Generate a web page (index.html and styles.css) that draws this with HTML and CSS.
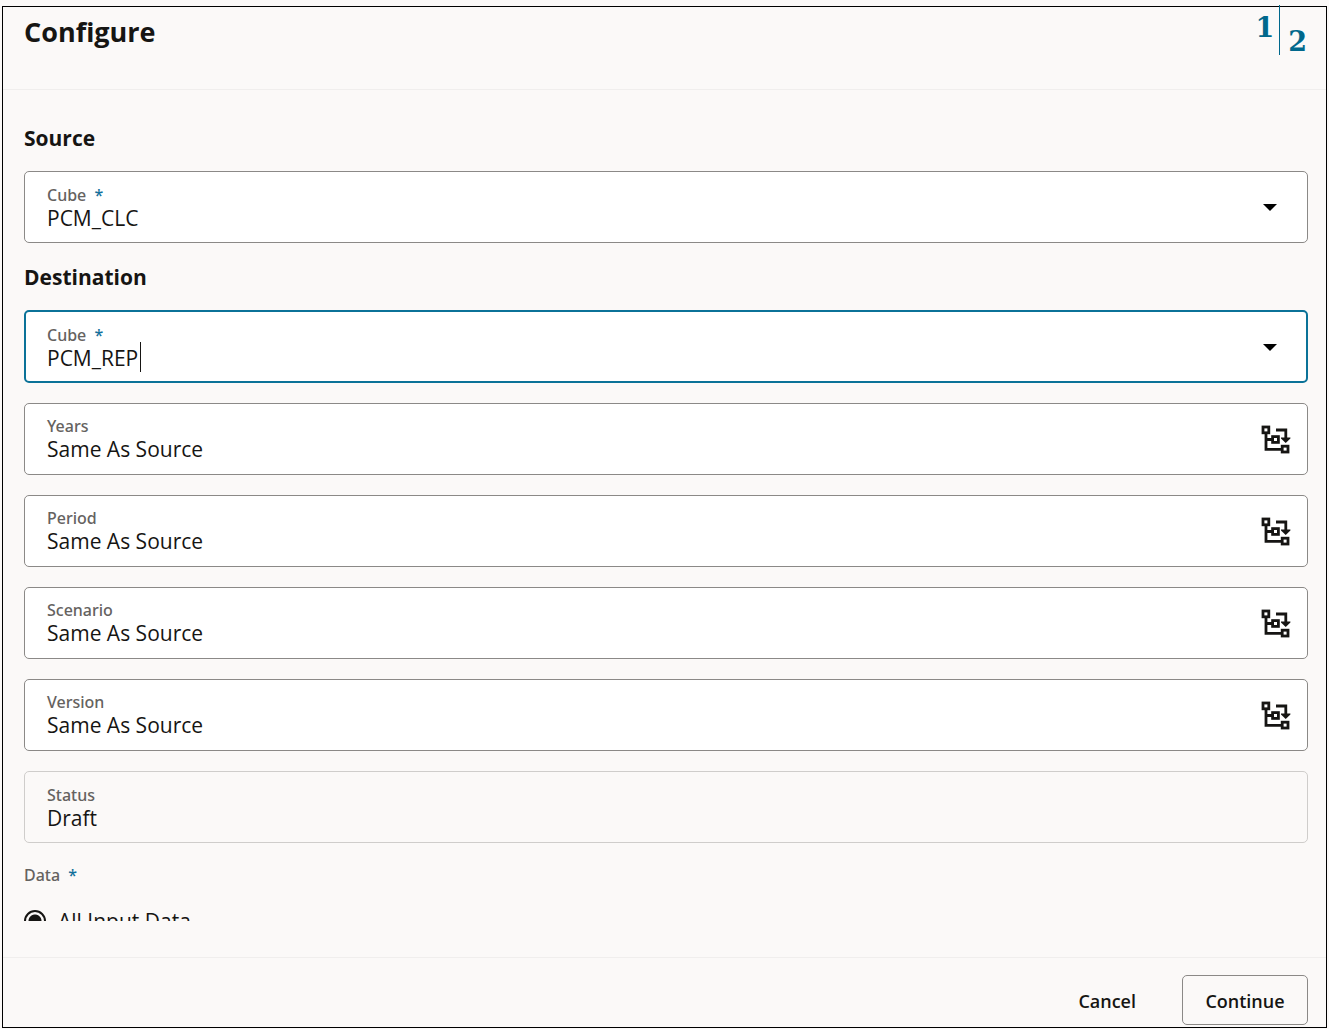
FILE: index.html
```html
<!DOCTYPE html>
<html lang="en">
<head>
  <meta charset="utf-8">
  <title>Configure</title>
  <link rel="stylesheet" href="styles.css">
</head>
<body>
  <!-- tree icon shared by the member selector buttons -->
  <svg class="symbols" aria-hidden="true">
    <symbol id="icon-tree" viewBox="0 -1 30 30">
      <g fill="none" stroke="currentColor" stroke-width="2.8">
        <rect x="2" y="2" width="5.8" height="5.8"/>
        <rect x="11.6" y="11.6" width="5.8" height="5.8"/>
        <rect x="21.2" y="21.2" width="5.8" height="5.8"/>
        <path d="M5 9v15.4h15M5 14.5h6M15 5h9.8v8"/>
      </g>
      <path d="M20 12.6h9.4v1L24.7 18 20 13.6z" fill="currentColor"/>
    </symbol>
  </svg>

  <form class="dialog">
    <header class="dialog-header">
      <h1>Configure</h1>
      <div class="steps">
        <span class="step">1</span>
        <span class="step step-last">2</span>
      </div>
    </header>

    <main class="dialog-body">
      <h2>Source</h2>
      <div class="field combo">
        <div class="field-text">
          <label for="source-cube">Cube <span class="required">*</span></label>
          <select id="source-cube" required>
            <option selected>PCM_CLC</option>
            <option>PCM_REP</option>
          </select>
        </div>
        <svg class="arrow" viewBox="0 0 14 7" aria-hidden="true"><path d="M0 0h14L7 7z"/></svg>
      </div>

      <h2>Destination</h2>
      <div class="fields">
        <div class="field combo focused">
          <div class="field-text">
            <label for="dest-cube">Cube <span class="required">*</span></label>
            <select id="dest-cube" required>
              <option>PCM_CLC</option>
              <option selected>PCM_REP</option>
            </select>
          </div>
          <span class="caret"></span>
          <svg class="arrow" viewBox="0 0 14 7" aria-hidden="true"><path d="M0 0h14L7 7z"/></svg>
        </div>

        <div class="field">
          <div class="field-text">
            <label for="years">Years</label>
            <input type="text" id="years" value="Same As Source">
          </div>
          <button type="button" class="picker" aria-label="Select Years"><svg><use href="#icon-tree"/></svg></button>
        </div>

        <div class="field">
          <div class="field-text">
            <label for="period">Period</label>
            <input type="text" id="period" value="Same As Source">
          </div>
          <button type="button" class="picker" aria-label="Select Period"><svg><use href="#icon-tree"/></svg></button>
        </div>

        <div class="field">
          <div class="field-text">
            <label for="scenario">Scenario</label>
            <input type="text" id="scenario" value="Same As Source">
          </div>
          <button type="button" class="picker" aria-label="Select Scenario"><svg><use href="#icon-tree"/></svg></button>
        </div>

        <div class="field">
          <div class="field-text">
            <label for="version">Version</label>
            <input type="text" id="version" value="Same As Source">
          </div>
          <button type="button" class="picker" aria-label="Select Version"><svg><use href="#icon-tree"/></svg></button>
        </div>

        <div class="field readonly">
          <div class="field-text">
            <label for="status">Status</label>
            <input type="text" id="status" value="Draft" readonly>
          </div>
        </div>
      </div>

      <fieldset class="data">
        <legend>Data <span class="required">*</span></legend>
        <label class="choice" for="all-input">
          <input type="radio" id="all-input" name="data" checked>
          All Input Data
        </label>
      </fieldset>
    </main>

    <footer class="dialog-footer">
      <button type="button" class="button">Cancel</button>
      <button type="submit" class="button outlined">Continue</button>
    </footer>
  </form>
</body>
</html>
```
FILE: styles.css
```css
* {
  box-sizing: border-box;
}
body {
  margin: 0;
  padding: 6px 2px 1px;
  height: 100vh;
  background-color: #fbf9f8;
  color: #161513;
  font-family: "Segoe UI", "Open Sans", "Noto Sans", sans-serif;
  font-size: 21px;
}
.symbols {
  display: none;
}
.dialog {
  display: flex;
  flex-direction: column;
  height: 100%;
  border: 1px solid #000;
}
.dialog-header {
  display: flex;
  justify-content: space-between;
  align-items: flex-start;
  padding: 0 18px 34px 21px;
  border-bottom: 1px solid #f0eeed;
}
h1 {
  margin: 7px 0 0;
  font-size: 27px;
  line-height: 36px;
  font-weight: 700;
}
.steps {
  display: flex;
  margin-top: -2px;
  color: #00688c;
  font-family: "DejaVu Serif", serif;
  font-size: 27px;
  font-weight: 700;
  line-height: 32px;
}
.step {
  height: 50px;
  padding: 7px 5px 0;
}
.step-last {
  padding: 21px 1px 0 8px;
  border-left: 1px solid #00688c;
}
.dialog-body {
  flex: 1;
  min-height: 0;
  margin-bottom: 36px;
  padding: 34px 18px 0 21px;
  overflow: hidden;
}
h2 {
  margin: 0 0 19px;
  font-size: 21px;
  line-height: 28px;
  font-weight: 700;
}
.fields {
  display: flex;
  flex-direction: column;
  gap: 20px;
}
.field {
  position: relative;
  display: flex;
  align-items: center;
  padding: 11px 16px 11px 22px;
  border: 1px solid #8b8987;
  border-radius: 5px;
  background-color: #fff;
}
.field + h2 {
  margin-top: 20px;
}
.field.combo,
.field.readonly {
  padding-top: 12px;
  padding-bottom: 10px;
}
.field.focused {
  padding: 12px 15px 9px 21px;
  border: 2px solid #0b7298;
}
.field.readonly {
  border-color: #cfcdcb;
  background-color: transparent;
}
.field-text {
  flex: 1;
  display: flex;
  flex-direction: column;
}
.field label,
legend {
  color: #65625f;
  font-family: "Segoe UI", "Noto Sans", sans-serif;
  font-size: 16px;
  line-height: 22px;
  font-weight: 500;
}
.required {
  margin-left: 4px;
  color: #14709b;
}
.field input,
.field select {
  width: 100%;
  height: 24px;
  margin: 0 0 2px;
  padding: 0;
  border: 0;
  outline: 0;
  background: none;
  color: inherit;
  font: inherit;
  line-height: 24px;
  appearance: none;
}
.arrow {
  width: 14px;
  height: 7px;
  margin: 0 14px 2px 0;
}
/* text cursor of the focused box */
.caret {
  position: absolute;
  left: 114px;
  bottom: 9px;
  width: 1px;
  height: 30px;
  background-color: #161513;
}
.picker {
  padding: 0;
  border: 0;
  background: none;
  color: inherit;
  cursor: pointer;
}
.picker svg {
  display: block;
  width: 30px;
  height: 30px;
}
.data {
  margin: 21px 0 0;
  padding: 0;
  border: 0;
}
legend {
  padding: 0;
}
.choice {
  display: flex;
  align-items: center;
  gap: 12px;
  margin-top: 19px;
  line-height: 32px;
}
.choice input {
  width: 22px;
  height: 22px;
  margin: 0;
  border: 2px solid #161513;
  border-radius: 50%;
  background: radial-gradient(circle, #161513 6px, transparent 7px);
  appearance: none;
}
.dialog-footer {
  display: flex;
  justify-content: flex-end;
  gap: 23px;
  padding: 17px 18px 2px;
  border-top: 1px solid #f0eeed;
}
.button {
  height: 50px;
  padding: 2px 22px 0;
  border: 1px solid transparent;
  border-radius: 5px;
  background: none;
  color: inherit;
  font-family: inherit;
  font-size: 18px;
  font-weight: 600;
  cursor: pointer;
}
.button.outlined {
  min-width: 126px;
  border-color: #8b8987;
}
```
